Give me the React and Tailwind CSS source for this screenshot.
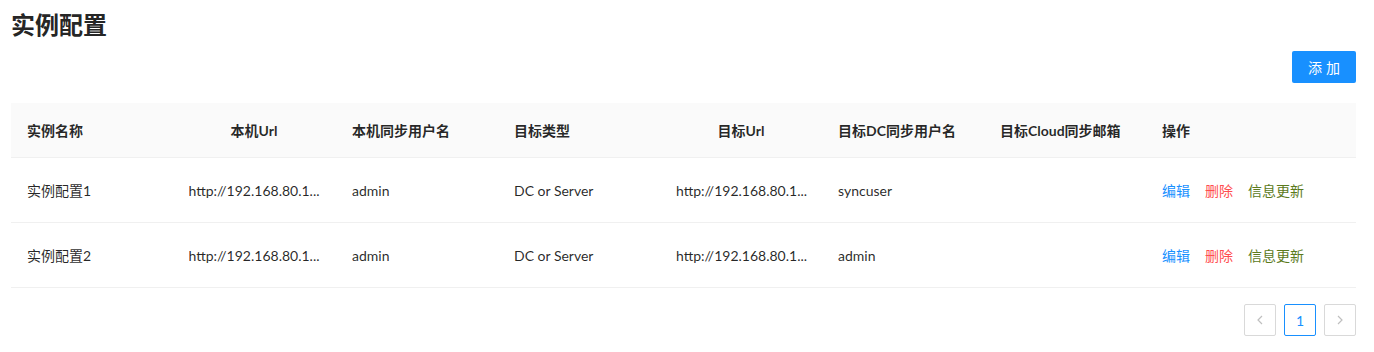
import React from 'react';

const columns = [
  { title: '实例名称', key: 'name', w: 'w-[161px]' },
  { title: '本机Url', key: 'localUrl', w: 'w-[164px]', center: true },
  { title: '本机同步用户名', key: 'localUser', w: 'w-[162px]' },
  { title: '目标类型', key: 'targetType', w: 'w-[162px]' },
  { title: '目标Url', key: 'targetUrl', w: 'w-[162px]', center: true },
  { title: '目标DC同步用户名', key: 'dcUser', w: 'w-[162px]' },
  { title: '目标Cloud同步邮箱', key: 'cloudMail', w: 'w-[162px]' },
  { title: '操作', key: 'action', w: 'flex-1' },
];

const rows = [
  {
    name: '实例配置1',
    localUrl: 'http://192.168.80.1...',
    localUser: 'admin',
    targetType: 'DC or Server',
    targetUrl: 'http://192.168.80.1...',
    dcUser: 'syncuser',
    cloudMail: '',
  },
  {
    name: '实例配置2',
    localUrl: 'http://192.168.80.1...',
    localUser: 'admin',
    targetType: 'DC or Server',
    targetUrl: 'http://192.168.80.1...',
    dcUser: 'admin',
    cloudMail: '',
  },
];

const Actions = () => (
  <div className="flex gap-[15px]">
    <span className="text-[#1890ff]">编辑</span>
    <span className="text-[#ff4d4f]">删除</span>
    <span className="text-[#5b7a1c]">信息更新</span>
  </div>
);

export default function App() {
  return (
    <div
      className="bg-white pl-[11px] pr-[18px] pt-[7px] text-[14px] text-[rgba(0,0,0,0.85)]"
      style={{ fontFamily: 'Lato, "Noto Sans CJK SC", sans-serif' }}
    >
      <h1 className="text-[24px] leading-[36px] font-bold text-[#262626]">实例配置</h1>

      {/* Toolbar */}
      <div className="flex justify-end mt-[8px] mb-[20px]">
        <button className="h-[32px] w-[64px] rounded-[2px] bg-[#1890ff] text-white text-[14px] tracking-[4px] pl-[4px]">
          添加
        </button>
      </div>

      {/* Table */}
      <div>
        <div className="flex h-[55px] items-center bg-[#fafafa] border-b border-[#f0f0f0] font-bold">
          {columns.map((c) => (
            <div key={c.key} className={`${c.w} px-4 ${c.center ? 'text-center' : ''}`}>
              {c.title}
            </div>
          ))}
        </div>
        {rows.map((r, i) => (
          <div key={i} className="flex h-[65px] items-center border-b border-[#f0f0f0]">
            {columns.map((c) => (
              <div key={c.key} className={`${c.w} px-4 ${c.center ? 'text-center' : ''}`}>
                {c.key === 'action' ? <Actions /> : r[c.key]}
              </div>
            ))}
          </div>
        ))}
      </div>

      {/* Pagination */}
      <div className="flex justify-end gap-2 mt-4 pb-4">
        <div className="w-8 h-8 flex items-center justify-center border border-[#d9d9d9] rounded-[2px] text-[#bfbfbf]">
          <svg width="12" height="12" viewBox="0 0 12 12" fill="none" stroke="currentColor" strokeWidth="1.2">
            <path d="M8 2 L4 6 L8 10" />
          </svg>
        </div>
        <div className="w-8 h-8 flex items-center justify-center border border-[#1890ff] rounded-[2px] text-[#1890ff]">
          1
        </div>
        <div className="w-8 h-8 flex items-center justify-center border border-[#d9d9d9] rounded-[2px] text-[#bfbfbf]">
          <svg width="12" height="12" viewBox="0 0 12 12" fill="none" stroke="currentColor" strokeWidth="1.2">
            <path d="M4 2 L8 6 L4 10" />
          </svg>
        </div>
      </div>
    </div>
  );
}
